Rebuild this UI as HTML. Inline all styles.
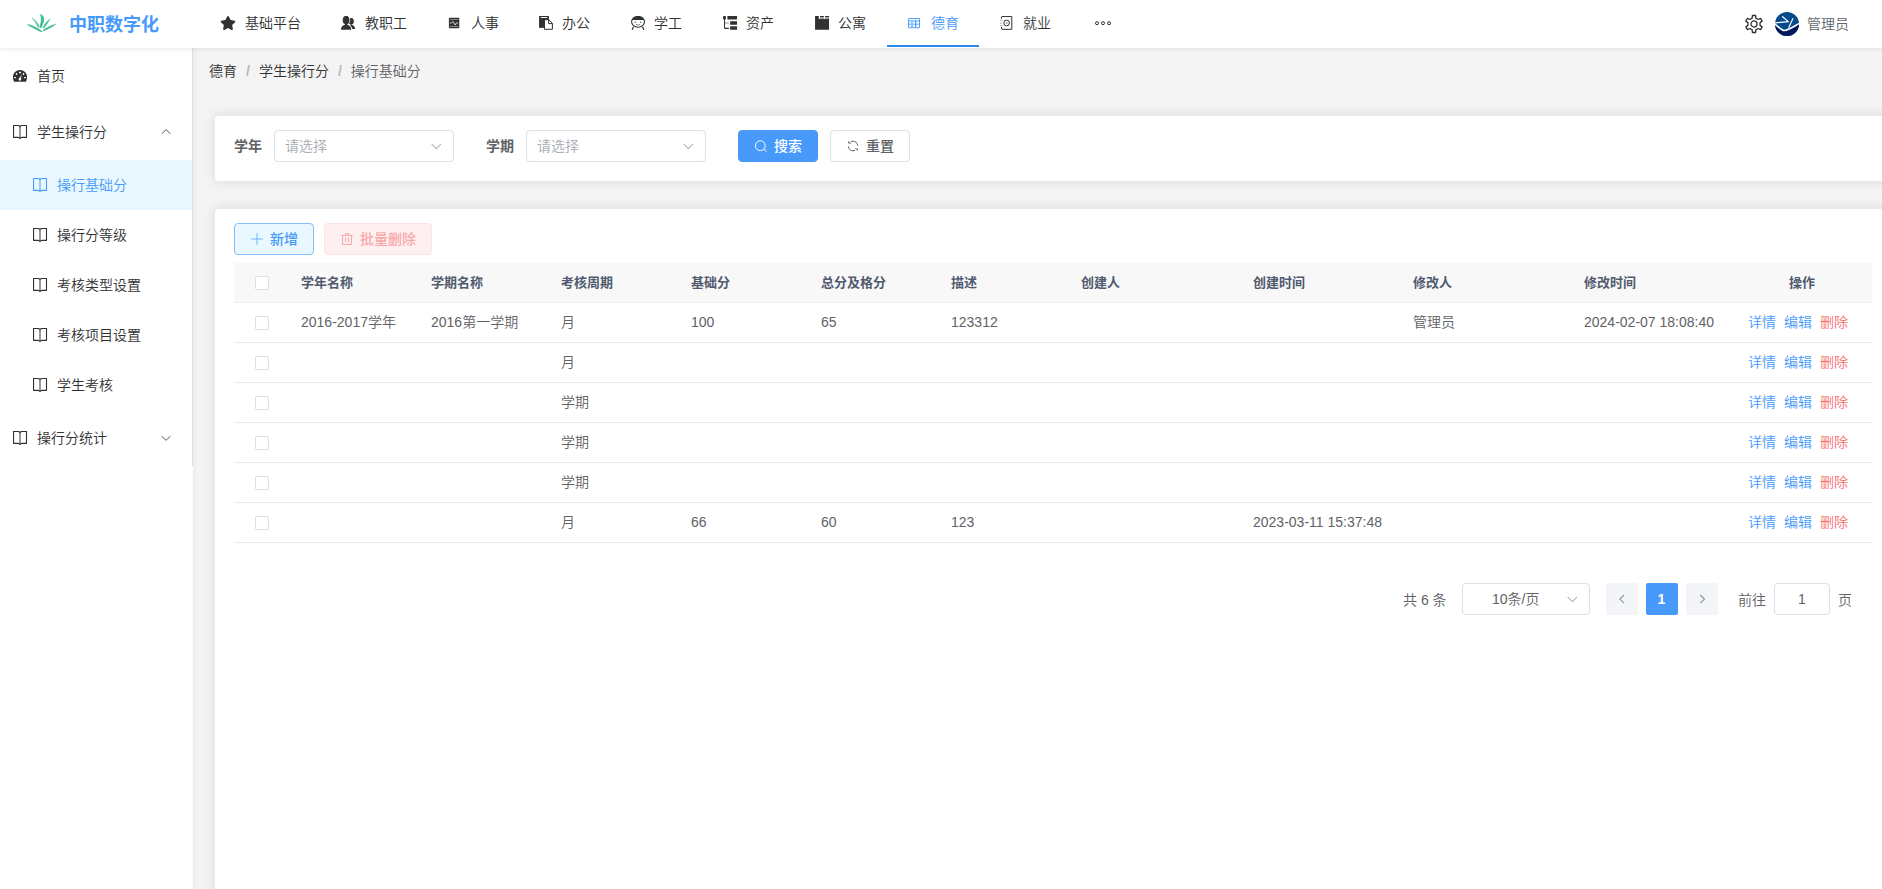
<!DOCTYPE html>
<html lang="zh-CN">
<head>
<meta charset="utf-8">
<title>操行基础分</title>
<style>
*{box-sizing:border-box;margin:0;padding:0}
html,body{width:1882px;height:889px;overflow:hidden;background:#f4f4f4}
body{font-family:"Liberation Sans","Noto Sans CJK SC",sans-serif;font-size:14px;color:#303133;position:relative;font-weight:350}
.abs{position:absolute}
svg{display:block}
/* header */
#header{position:absolute;left:0;top:0;width:1882px;height:48px;background:#fff;box-shadow:0 1px 4px rgba(0,21,41,.10);z-index:10}
#logo{position:absolute;left:27px;top:14px;width:30px;height:20px}
#title{position:absolute;left:69px;top:0;height:48px;line-height:50px;font-size:18px;font-weight:700;color:#479afa;white-space:nowrap}
.nav{position:absolute;top:0;height:48px;line-height:46px;white-space:nowrap;color:#303133;font-size:14px}
.nav svg{position:absolute;left:0;top:15px}
.nav span{position:absolute;left:24px;top:0}
.nav.on{color:#479afa}
#navline{position:absolute;left:887px;top:45px;width:92px;height:2px;background:#2e8bf2}
#user{position:absolute;left:1807px;top:0;line-height:49px;height:48px;color:#606266;white-space:nowrap}
/* sidebar */
#side{position:absolute;left:0;top:48px;width:193px;height:841px;background:#fff;z-index:5;box-shadow:1px 0 6px rgba(0,0,0,.05)}
#sideline{position:absolute;left:192px;top:0;width:1px;height:418px;background:#dcdfe6}
.m{position:absolute;left:0;width:192px;white-space:nowrap;color:#303133}
.m1{height:56px;line-height:57px}
.m2{height:50px;line-height:51px}
.m svg{position:absolute}
.m span{position:absolute;top:0}
.m1 span{left:37px}
.m2 span{left:57px}
.m.on{background:#e9f8fe;color:#479afa}
/* main */
#crumb{position:absolute;left:209px;top:57px;line-height:28px;white-space:nowrap;color:#303133}
#crumb i{font-style:normal;font-weight:700;color:#b4b8c2;margin:0 9px 0 9px}
#crumb b{font-weight:350;color:#606266}
.card{position:absolute;left:214px;width:1700px;background:#fff;border:1px solid #e6ebf5;border-radius:4px;box-shadow:0 0 12px rgba(0,0,0,.10)}
#c1{top:115px;height:67px}
#c2{top:208px;height:720px}
.lab{position:absolute;font-weight:700;color:#606266;line-height:32px;top:130px}
.sel{position:absolute;top:130px;height:32px;width:180px;border:1px solid #dcdfe6;border-radius:4px;background:#fff;color:#a8abb2;line-height:30px;padding-left:10px}
.btn{position:absolute;height:32px;border-radius:4px;line-height:30px;border:1px solid #dcdfe6;white-space:nowrap;font-weight:500}
table{position:absolute;left:234px;top:263px;width:1638px;border-collapse:separate;border-spacing:0;table-layout:fixed}
th{height:40px;background:#f8f8f9;color:#515a6e;font-size:13px;font-weight:700;text-align:left;padding:0 10px 1px;line-height:37px;border-bottom:1px solid #e8ecf4;white-space:nowrap}
td{height:40px;color:#606266;font-size:14px;padding:0 10px 1px;border-bottom:1px solid #e8ecf4;white-space:nowrap;line-height:37px}
.cb{display:block;width:14px;height:14px;border:1px solid #dcdfe6;border-radius:2px;background:#fff;margin-left:11px;margin-top:2px}
.op{color:#479afa;padding-left:16px}
.op span{margin-right:8px}
.op em{font-style:normal;color:#f56c6c}
.pg{position:absolute;top:583px;height:32px;line-height:32px;color:#606266;white-space:nowrap}
</style>
</head>
<body>
<div id="header">
  <svg id="logo" viewBox="0 0 30 20" fill="#3fb992" stroke="#3fb992" stroke-width=".35"><path d="M0,10.5 C3.5,10.2 9.5,13.2 15.3,17.3 C15.2,17.9 14.6,18.1 14.1,17.9 C8.6,15.3 3.2,12.6 0,10.5Z"/><path d="M5.1,4.1 C8.2,5.8 11.2,9.3 12.4,13.0 C11.9,13.4 11.3,13.3 11.0,12.9 C9.6,9.6 7.6,6.6 5.1,4.1Z"/><path d="M13.1,0.1 C15.6,0.9 17.6,3.5 16.9,6.6 C16.4,9 15.3,11.5 14.6,13.6 C14,13.9 13.2,13.8 12.9,13.3 C13.6,9.5 15.2,4.2 13.1,0.1Z"/><path d="M23.1,5.2 C20.9,8.4 18.9,11.4 17.0,14.1 C16.6,14.2 16.2,14 16.1,13.6 C17.2,10.3 20,6.8 23.1,5.2Z"/><path d="M28.9,10.2 C25.3,12.8 21,15.2 16.9,16.9 C16.4,16.9 16,16.5 16.1,16 C20,13.2 24.9,10.6 28.9,10.2Z"/></svg>
  <div id="title">中职数字化</div>
  <div class="nav" style="left:221px"><svg width="16" height="14" viewBox="0 0 576 512" style="left:-1px;top:16px" fill="#303133"><path d="M259.3 17.8L194 150.2 47.9 171.5c-26.200 3.800-36.700 36.100-17.700 54.600l105.700 103-25 145.500c-4.500 26.300 23.200 46 46.400 33.700L288 439.600l130.700 68.700c23.200 12.200 50.900-7.400 46.400-33.700l-25-145.500 105.700-103c19-18.500 8.500-50.800-17.700-54.600L382 150.200 316.700 17.800c-11.700-23.600-45.600-23.900-57.400 0z"/></svg><span>基础平台</span></div>
  <div class="nav" style="left:341px"><svg width="15" height="14" viewBox="0 0 15 14" style="top:16px" fill="#303133"><ellipse cx="10.1" cy="5.2" rx="2.7" ry="3.3"/><path d="M9.6,8.2 C12.4,8.8 14.2,10.4 14.1,12.9 L11.5,12.9 L9,9Z"/><ellipse cx="5.1" cy="4.1" rx="3.4" ry="4.3" stroke="#fff" stroke-width="1.5"/><path d="M0,13.8 C0,10.6 1.4,9.5 3.8,8.7 L6.4,8.7 C8.8,9.500 10.200,10.600 10.200,13.800Z" stroke="#fff" stroke-width="1.5"/><ellipse cx="5.1" cy="4.1" rx="3.4" ry="4.3"/><path d="M0,13.8 C0,10.6 1.4,9.5 3.8,8.7 L4,7 L6.2,7 L6.400,8.700 C8.800,9.500 10.200,10.600 10.200,13.800Z"/></svg><span>教职工</span></div>
  <div class="nav" style="left:447px"><svg width="14" height="14" viewBox="0 0 14 14" style="top:16px"><rect x="1.900" y="1.800" width="10.400" height="10.400" rx=".6" fill="#303133"/><rect x="2.800" y="3" width="8.600" height=".7" fill="#aaa"/><rect x="2.800" y="10.300" width="8.600" height=".7" fill="#aaa"/><path d="M2.900,7.100 H4.500 L6,5.400 L8.300,9.100 L9.400,6.900 H11.200" fill="none" stroke="#ddd" stroke-width=".9"/></svg><span>人事</span></div>
  <div class="nav" style="left:538px"><svg width="16" height="15" viewBox="0 0 16 15" style="top:16px"><rect x="1.060" y="0" width="9.800" height="11.850" fill="#303133"/><rect x="2.800" y="1.050" width="6.400" height="1" fill="#fff"/><path d="M6.500,3.700 H10.800 L14.400,7.300 V13.300 H6.500Z" fill="#fff" stroke="#303133" stroke-width="1"/><path d="M10.600,3.700 V7.600 H14.400" fill="none" stroke="#303133" stroke-width="1"/></svg><span>办公</span></div>
  <div class="nav" style="left:630px"><svg width="16" height="15" viewBox="0 0 16 15" style="top:16px"><defs><clipPath id="hc"><rect x="0" y="0" width="16" height="3.900"/></clipPath></defs><ellipse cx="8.050" cy="5.800" rx="6.450" ry="5.400" fill="#fff" stroke="#303133" stroke-width="1.100"/><ellipse cx="8.050" cy="5.800" rx="6.450" ry="5.400" fill="#303133" clip-path="url(#hc)"/><circle cx="5.300" cy="6.300" r=".75" fill="#666"/><circle cx="10.700" cy="6.300" r=".75" fill="#666"/><path d="M5.900,8.300 Q8,10 10.100,8.300" fill="none" stroke="#777" stroke-width=".9"/><path d="M3.500,10.800 L2.200,13.700 M12.500,10.800 L13.800,13.700" stroke="#303133" stroke-width="1.200" fill="none"/></svg><span>学工</span></div>
  <div class="nav" style="left:722px"><svg width="16" height="14" viewBox="0 0 16 14" style="top:16px" fill="#303133"><rect x="1.060" y="0" width="2.850" height="3.450" rx=".7"/><rect x="5.400" y=".050" width="9.650" height="3.400" rx=".4"/><rect x="8.100" y="5.200" width="6.950" height="3.550" rx=".4"/><rect x="8.100" y="10.250" width="6.950" height="3.550" rx=".4"/><path d="M2.050,3 H3.050 V11.300 Q3.050,11.850 3.600,11.850 H6.900 V12.950 H3 Q2.050,12.950 2.050,12Z"/><rect x="3" y="6.400" width="3.900" height="1.100" opacity=".5"/></svg><span>资产</span></div>
  <div class="nav" style="left:814px"><svg width="16" height="14" viewBox="0 0 16 14" style="top:16px" fill="#303133"><path d="M1.060,0 H4.800 V3.050 H15.050 V13.800 H1.060Z"/><rect x="6" y="0" width="3.850" height="1.200"/><rect x="11.100" y="0" width="3.950" height="1.200"/><rect x="6" y="1.200" width="3.850" height="1.900" fill="#999"/><rect x="11.100" y="1.200" width="3.950" height="1.900" fill="#999"/></svg><span>公寓</span></div>
  <div class="nav on" style="left:907px"><svg width="14" height="14" viewBox="0 0 14 14" style="top:16px"><rect x="1.560" y="2.560" width="11" height="9.150" rx=".5" fill="#fff" stroke="#479afa" stroke-width="1"/><rect x="2.060" y="4.050" width="10" height="1.850" fill="#a3cfff"/><rect x="4.050" y="4.050" width="1.950" height="7.200" fill="#8dc3ff"/><rect x="8" y="4.050" width="1.200" height="7.200" fill="#479afa"/><rect x="2.060" y="7.500" width="10" height="1.600" fill="#8dc3ff"/><rect x="8" y="7.500" width="1.200" height="1.600" fill="#479afa"/></svg><span>德育</span></div>
  <div class="nav" style="left:999px"><svg width="15" height="14" viewBox="0 0 15 14" style="top:16px" fill="none"><path d="M2.550,2.700 V1 Q2.550,.46 3.100,.46 H12.800 V13.300 H3.100 Q2.550,13.300 2.550,12.750 V10.850" stroke="#303133" stroke-width="1"/><path d="M1.060,4.400 H3.660 M1.060,7.200 H3 M1.060,9.500 H3.660" stroke="#999" stroke-width=".8"/><circle cx="7.620" cy="7" r="2.850" stroke="#303133" stroke-width="1"/><circle cx="7.700" cy="7" r=".9" fill="#999"/></svg><span>就业</span></div>
  <svg class="abs" style="left:1094px;top:20px" width="18" height="6" viewBox="0 0 18 6" fill="none" stroke="#303133" stroke-width="1"><circle cx="3" cy="3.200" r="1.500"/><circle cx="9" cy="3.200" r="1.500"/><circle cx="15" cy="3.200" r="1.500"/></svg>
  <svg class="abs" id="gear" style="left:1744px;top:14px" width="20" height="20" viewBox="0 0 20 20" fill="none" stroke="#303133" stroke-width="1.300"><path stroke-linejoin="round" d="M8.19,4.07 L8.42,1.49 L11.58,1.49 L11.81,4.07 L14.23,5.47 L16.58,4.38 L18.15,7.11 L16.04,8.61 L16.04,11.39 L18.15,12.89 L16.58,15.62 L14.23,14.53 L11.81,15.93 L11.58,18.51 L8.42,18.51 L8.19,15.93 L5.77,14.53 L3.42,15.62 L1.85,12.89 L3.96,11.39 L3.96,8.61 L1.85,7.11 L3.42,4.38 L5.77,5.47Z"/><circle cx="10" cy="10" r="3.050"/></svg>
  <svg class="abs" style="left:1775px;top:12px" width="24" height="24" viewBox="0 0 24 24"><defs><clipPath id="av"><circle cx="12" cy="12" r="12"/></clipPath></defs><g clip-path="url(#av)"><rect width="24" height="24" fill="#044b8c"/><path d="M-1,11.600 C2.500,13.200 6,18.700 9.600,18.500 C13.500,18.200 19,14.300 25,11.100 V25 H-1Z" fill="#02185c"/><path d="M-1,11.600 C2.500,13.200 6,18.700 9.600,18.500 C13.500,18.200 19,14.300 25,11.100" fill="none" stroke="#fff" stroke-width="1.700"/><path d="M-.5,11 L13.300,9.600 M7.600,4.700 L13.300,9.600 M17.800,6.700 L13.900,15.200" fill="none" stroke="#fff" stroke-width="1.200" stroke-linecap="round"/></g></svg>
  <div id="navline"></div>
  <div id="user">管理员</div>
</div>
<div id="side">
  <div id="sideline"></div>
  <div class="m m1" style="top:0"><svg style="left:13px;top:22px" width="14" height="12" viewBox="0 0 14 12"><path d="M1.200,11.800 C.300,10.600 0,9 0,7 C0,3 3,0 7,0 C11,0 14,3 14,7 C14,9 13.700,10.600 12.800,11.800Z" fill="#303133"/><g fill="#fff"><ellipse cx="3.540" cy="4" rx=".800" ry=".900"/><rect x="6" y="1.850" width="2" height="1.300" rx=".5"/><ellipse cx="10.500" cy="4" rx=".800" ry=".900"/><rect x="1.100" y="6.950" width="1.900" height="1.200" rx=".5"/><rect x="11" y="6.950" width="1.900" height="1.200" rx=".5"/><circle cx="6.900" cy="9.100" r="1.350"/><path d="M8.700,4.300 L7.900,9.300 L6.300,8.500Z" opacity=".8"/><rect x="6.400" y="10" width=".800" height="1.800" opacity=".6"/></g></svg><span>首页</span></div>
  <div class="m m1" style="top:56px"><svg style="left:13px;top:21px" width="15" height="15" viewBox="0 0 15 15" fill="none"><path d="M7,1.900 C6.600,.900 6,.450 5,.450 H.550 V12.350 H5 C6,12.350 6.600,12.700 7,13.600 C7.400,12.700 8,12.350 9,12.350 H13.500 V.450 H9 C8,.450 7.400,.900 7,1.900Z" stroke="#303133" stroke-width="1.100" stroke-linejoin="round"/><path d="M7,1.900 V13" stroke="#303133" stroke-width="1.800" opacity=".55"/></svg><svg style="left:161px;top:24px" width="11" height="7" viewBox="0 0 11 7" fill="none" stroke="#55595f" stroke-width="1"><path d="M.800,5.800 L5.100,1.700 L9.400,5.800"/></svg><span>学生操行分</span></div>
  <div class="m m2 on" style="top:112px"><svg style="left:33px;top:18px" width="15" height="15" viewBox="0 0 15 15" fill="none"><path d="M7,1.900 C6.600,.900 6,.450 5,.450 H.550 V12.350 H5 C6,12.350 6.600,12.700 7,13.600 C7.400,12.700 8,12.350 9,12.350 H13.500 V.450 H9 C8,.450 7.400,.900 7,1.900Z" stroke="#479afa" stroke-width="1.100" stroke-linejoin="round"/><path d="M7,1.900 V13" stroke="#479afa" stroke-width="1.800" opacity=".55"/></svg><span>操行基础分</span></div>
  <div class="m m2" style="top:162px"><svg style="left:33px;top:18px" width="15" height="15" viewBox="0 0 15 15" fill="none"><path d="M7,1.900 C6.600,.900 6,.450 5,.450 H.550 V12.350 H5 C6,12.350 6.600,12.700 7,13.600 C7.400,12.700 8,12.350 9,12.350 H13.500 V.450 H9 C8,.450 7.400,.900 7,1.900Z" stroke="#303133" stroke-width="1.100" stroke-linejoin="round"/><path d="M7,1.900 V13" stroke="#303133" stroke-width="1.800" opacity=".55"/></svg><span>操行分等级</span></div>
  <div class="m m2" style="top:212px"><svg style="left:33px;top:18px" width="15" height="15" viewBox="0 0 15 15" fill="none"><path d="M7,1.900 C6.600,.900 6,.450 5,.450 H.550 V12.350 H5 C6,12.350 6.600,12.700 7,13.600 C7.400,12.700 8,12.350 9,12.350 H13.500 V.450 H9 C8,.450 7.400,.900 7,1.900Z" stroke="#303133" stroke-width="1.100" stroke-linejoin="round"/><path d="M7,1.900 V13" stroke="#303133" stroke-width="1.800" opacity=".55"/></svg><span>考核类型设置</span></div>
  <div class="m m2" style="top:262px"><svg style="left:33px;top:18px" width="15" height="15" viewBox="0 0 15 15" fill="none"><path d="M7,1.900 C6.600,.900 6,.450 5,.450 H.550 V12.350 H5 C6,12.350 6.600,12.700 7,13.600 C7.400,12.700 8,12.350 9,12.350 H13.500 V.450 H9 C8,.450 7.400,.900 7,1.900Z" stroke="#303133" stroke-width="1.100" stroke-linejoin="round"/><path d="M7,1.900 V13" stroke="#303133" stroke-width="1.800" opacity=".55"/></svg><span>考核项目设置</span></div>
  <div class="m m2" style="top:312px"><svg style="left:33px;top:18px" width="15" height="15" viewBox="0 0 15 15" fill="none"><path d="M7,1.900 C6.600,.900 6,.450 5,.450 H.550 V12.350 H5 C6,12.350 6.600,12.700 7,13.600 C7.400,12.700 8,12.350 9,12.350 H13.500 V.450 H9 C8,.450 7.400,.900 7,1.900Z" stroke="#303133" stroke-width="1.100" stroke-linejoin="round"/><path d="M7,1.900 V13" stroke="#303133" stroke-width="1.800" opacity=".55"/></svg><span>学生考核</span></div>
  <div class="m m1" style="top:362px"><svg style="left:13px;top:21px" width="15" height="15" viewBox="0 0 15 15" fill="none"><path d="M7,1.900 C6.600,.900 6,.450 5,.450 H.550 V12.350 H5 C6,12.350 6.600,12.700 7,13.600 C7.400,12.700 8,12.350 9,12.350 H13.500 V.450 H9 C8,.450 7.400,.900 7,1.900Z" stroke="#303133" stroke-width="1.100" stroke-linejoin="round"/><path d="M7,1.900 V13" stroke="#303133" stroke-width="1.800" opacity=".55"/></svg><svg style="left:161px;top:25px" width="11" height="7" viewBox="0 0 11 7" fill="none" stroke="#55595f" stroke-width="1"><path d="M.800,1.200 L5.100,5.300 L9.400,1.200"/></svg><span>操行分统计</span></div>
</div>
<div id="crumb">德育<i>/</i>学生操行分<i>/</i><b>操行基础分</b></div>
<div class="card" id="c1"></div>
<div class="card" id="c2"></div>
<div class="lab" style="left:234px">学年</div>
<div class="sel" style="left:274px">请选择</div>
<div class="lab" style="left:486px">学期</div>
<div class="sel" style="left:526px">请选择</div>
<div class="btn" style="left:738px;top:130px;width:80px;background:#479afa;border-color:#479afa;color:#fff;padding-left:35px">搜索</div>
<div class="btn" style="left:830px;top:130px;width:80px;background:#fff;color:#606266;padding-left:35px">重置</div>
<div class="btn" style="left:234px;top:223px;width:80px;background:#e9f7fe;border-color:#7fc1fb;color:#479afa;padding-left:35px">新增</div>
<div class="btn" style="left:324px;top:223px;width:108px;background:#fef0f0;border-color:#fde2e2;color:#f9a7a7;padding-left:35px">批量删除</div>
<table>
<colgroup><col style="width:57px"><col style="width:130px"><col style="width:130px"><col style="width:130px"><col style="width:130px"><col style="width:130px"><col style="width:130px"><col style="width:172px"><col style="width:160px"><col style="width:171px"><col style="width:158px"><col style="width:140px"></colgroup>
<tr><th><i class="cb"></i></th><th>学年名称</th><th>学期名称</th><th>考核周期</th><th>基础分</th><th>总分及格分</th><th>描述</th><th>创建人</th><th>创建时间</th><th>修改人</th><th>修改时间</th><th style="text-align:center">操作</th></tr>
<tr><td><i class="cb"></i></td><td>2016-2017学年</td><td>2016第一学期</td><td>月</td><td>100</td><td>65</td><td>123312</td><td></td><td></td><td>管理员</td><td>2024-02-07 18:08:40</td><td class="op"><span>详情</span><span>编辑</span><em>删除</em></td></tr>
<tr><td><i class="cb"></i></td><td></td><td></td><td>月</td><td></td><td></td><td></td><td></td><td></td><td></td><td></td><td class="op"><span>详情</span><span>编辑</span><em>删除</em></td></tr>
<tr><td><i class="cb"></i></td><td></td><td></td><td>学期</td><td></td><td></td><td></td><td></td><td></td><td></td><td></td><td class="op"><span>详情</span><span>编辑</span><em>删除</em></td></tr>
<tr><td><i class="cb"></i></td><td></td><td></td><td>学期</td><td></td><td></td><td></td><td></td><td></td><td></td><td></td><td class="op"><span>详情</span><span>编辑</span><em>删除</em></td></tr>
<tr><td><i class="cb"></i></td><td></td><td></td><td>学期</td><td></td><td></td><td></td><td></td><td></td><td></td><td></td><td class="op"><span>详情</span><span>编辑</span><em>删除</em></td></tr>
<tr><td><i class="cb"></i></td><td></td><td></td><td>月</td><td>66</td><td>60</td><td>123</td><td></td><td>2023-03-11 15:37:48</td><td></td><td></td><td class="op"><span>详情</span><span>编辑</span><em>删除</em></td></tr>
</table>
<svg class="abs" style="left:431px;top:143px" width="11" height="7" viewBox="0 0 11 7" fill="none" stroke="#b4b8c0" stroke-width="1.1"><path d="M.6,.8 L5.300,5.700 L10,.8"/></svg><svg class="abs" style="left:683px;top:143px" width="11" height="7" viewBox="0 0 11 7" fill="none" stroke="#b4b8c0" stroke-width="1.1"><path d="M.6,.8 L5.300,5.700 L10,.8"/></svg><svg class="abs" style="left:1567px;top:596px" width="11" height="7" viewBox="0 0 11 7" fill="none" stroke="#b4b8c0" stroke-width="1.1"><path d="M.6,.8 L5.300,5.700 L10,.8"/></svg><svg class="abs" style="left:754px;top:139px" width="14" height="14" viewBox="0 0 14 14" fill="none" stroke="#fff" stroke-width="1"><circle cx="6.300" cy="6.700" r="4.900"/><path d="M9.900,10.300 L12.600,12.900"/></svg><svg class="abs" style="left:847px;top:140px" width="12" height="12" viewBox="0 0 12 12" fill="none" stroke="#606266" stroke-width="1"><path d="M4,1.650 A4.800,4.800 0 0 1 10.780,5.600 M1.220,6.400 A4.800,4.800 0 0 0 8,10.350"/><path d="M1.100,1.100 V3.600 H4.700Z M10.900,10.800 V8.400 H7.300Z" fill="#606266" stroke="none" opacity=".85"/></svg><svg class="abs" style="left:251px;top:233px" width="12" height="12" viewBox="0 0 12 12" fill="none" stroke="#6db3fb" stroke-width="1"><path d="M6,.2 V11.800 M.2,6 H11.800"/></svg><svg class="abs" style="left:341px;top:232px" width="12" height="13" viewBox="0 0 12 13" fill="none" stroke="#f9a7a7" stroke-width="1"><path d="M.2,3.400 H11.900 M4.500,3.400 V1.700 H8 V3.400 M1.600,3.400 V12.500 H10.500 V3.400 M4.500,5.400 V10 M7.500,5.400 V10"/></svg><svg class="abs" style="z-index:3;left:1618px;top:594px" width="8" height="11" viewBox="0 0 8 11" fill="none" stroke="#8d9096" stroke-width="1.1"><path d="M6.100,1 L1.800,5.100 L6.100,9.200"/></svg><svg class="abs" style="z-index:3;left:1698px;top:594px" width="8" height="11" viewBox="0 0 8 11" fill="none" stroke="#8d9096" stroke-width="1.1"><path d="M2.200,1 L6.500,5.100 L2.200,9.200"/></svg>
<div class="pg" style="left:1403px;line-height:34px">共 6 条</div>
<div class="pg" style="left:1462px;width:128px;border:1px solid #dcdfe6;border-radius:4px;line-height:30px;padding-left:29px">10条/页</div>
<div class="pg" style="left:1606px;width:32px;background:#f4f5f8;border-radius:2px"></div>
<div class="pg" style="left:1646px;width:32px;background:#479afa;border-radius:2px;color:#fff;font-weight:700;text-align:center;font-size:14px;line-height:33px;padding-right:1px">1</div>
<div class="pg" style="left:1686px;width:32px;background:#f4f5f8;border-radius:2px"></div>
<div class="pg" style="left:1738px;line-height:34px">前往</div>
<div class="pg" style="left:1774px;width:56px;border:1px solid #dcdfe6;border-radius:4px;line-height:30px;text-align:center">1</div>
<div class="pg" style="left:1838px;line-height:34px">页</div>
</body>
</html>
